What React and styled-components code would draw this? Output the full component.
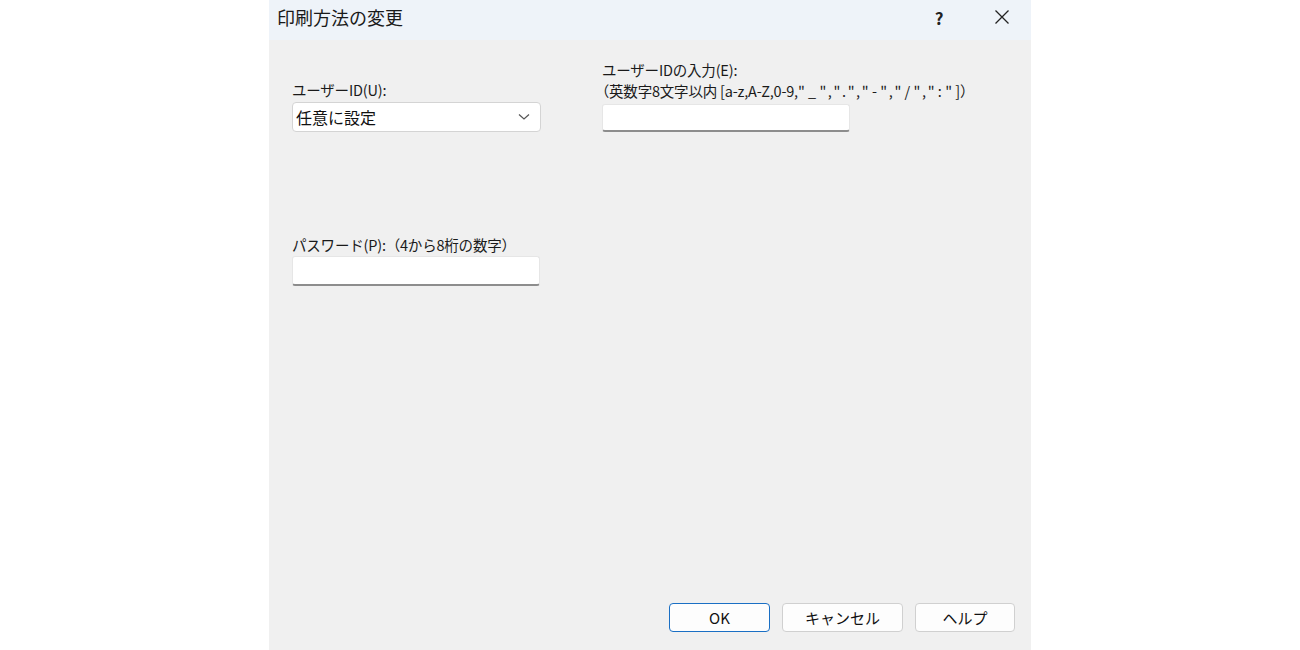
import React from "react";
import styled, { createGlobalStyle } from "styled-components";

const Global = createGlobalStyle`
  html, body { margin: 0; padding: 0; background: #ffffff; }
  body { font-family: "Noto Sans CJK JP", "Noto Sans", sans-serif; color: #1a1a1a; }
`;

const Page = styled.div`
  width: 1300px;
  height: 650px;
  display: flex;
  justify-content: center;
  overflow: hidden;
`;

const Dialog = styled.div`
  width: 762px;
  height: 650px;
  display: flex;
  flex-direction: column;
  background: #f0f0f0;
`;

const TitleBar = styled.div`
  height: 40px;
  flex: none;
  background: #eef3f9;
  display: flex;
  align-items: center;
  padding: 0 18px 0 8px;
`;

const Title = styled.div`
  flex: 1;
  font-size: 18px;
  color: #1a1a1a;
  margin-top: -6px;
`;

const TitleButton = styled.div`
  width: ${(p) => p.$w}px;
  margin-right: ${(p) => p.$mr || 0}px;
  height: 34px;
  display: flex;
  align-items: center;
  justify-content: center;
  font-size: 17px;
  font-weight: 600;
  color: #222;
  margin-top: -6px;
`;

const Body = styled.div`
  flex: 1;
  display: grid;
  grid-template-columns: 249px 250px;
  column-gap: 61px;
  padding: 0 23px;
  align-content: start;
`;

const Column = styled.div`
  display: flex;
  flex-direction: column;
  padding-top: ${(p) => p.$top}px;
`;

const Label = styled.div`
  font-size: 14.5px;
  line-height: ${(p) => p.$lh || 18}px;
  color: #1a1a1a;
  white-space: nowrap;
  letter-spacing: -0.2px;
`;

const Half = styled.span`
  font-feature-settings: "halt";
`;

const Wide = styled.span`
  letter-spacing: 3.3px;
`;

const Combo = styled.div`
  margin-top: 3px;
  height: 30px;
  box-sizing: border-box;
  border: 1px solid #d4d4d4;
  border-radius: 4px;
  background: #ffffff;
  display: flex;
  align-items: center;
  padding: 0 10px 0 3px;
  font-size: 16px;
  color: #111;
`;

const ComboText = styled.span`
  flex: 1;
`;

const TextBox = styled.div`
  margin-top: ${(p) => p.$mt}px;
  width: ${(p) => p.$w}px;
  height: ${(p) => p.$h}px;
  box-sizing: border-box;
  background: #ffffff;
  border: 1px solid #e6e6e6;
  border-bottom: 2px solid #8d8d8d;
  border-radius: 3px;
`;

const Spacer = styled.div`
  height: ${(p) => p.$h}px;
`;

const Footer = styled.div`
  display: flex;
  justify-content: flex-end;
  gap: 12px;
  padding: 0 16px 18px 0;
`;

const Button = styled.div`
  height: 29px;
  width: ${(p) => p.$w}px;
  box-sizing: border-box;
  border: ${(p) => (p.$primary ? "1.5px solid #1a6fc4" : "1px solid #d0d0d0")};
  border-radius: 4px;
  background: #fdfdfd;
  display: flex;
  align-items: center;
  justify-content: center;
  font-size: 15px;
  color: #111;
`;

export default function App() {
  return (
    <>
      <Global />
      <Page>
        <Dialog>
          <TitleBar>
            <Title>印刷方法の変更</Title>
            <TitleButton $w={40} $mr={32}>?</TitleButton>
            <TitleButton $w={22}>
              <svg width="16" height="16" viewBox="0 0 16 16">
                <path d="M1.5 1.5 L14.5 14.5 M14.5 1.5 L1.5 14.5" stroke="#222" strokeWidth="1.3" fill="none" />
              </svg>
            </TitleButton>
          </TitleBar>
          <Body>
            <Column $top={41}>
              <Label>ユーザーID(U):</Label>
              <Combo>
                <ComboText>任意に設定</ComboText>
                <svg width="12" height="8" viewBox="0 0 12 8">
                  <path d="M1 1.5 L6 6 L11 1.5" stroke="#555" strokeWidth="1.2" fill="none" />
                </svg>
              </Combo>
              <Spacer $h={104} />
              <Label>パスワード(P):（4から8桁の数字）</Label>
              <TextBox $mt={2} $w={248} $h={30} />
            </Column>
            <Column $top={19}>
              <Label $lh={21}>
                ユーザーIDの入力(E):
                <br />
                <Half>（</Half>英数字8文字以内 [a-z,A-Z,0-9,<Wide>"_",".","-","/",":"</Wide>]<Half>）</Half>
              </Label>
              <TextBox $mt={3} $w={248} $h={28} />
            </Column>
          </Body>
          <Footer>
            <Button $primary $w={101}>OK</Button>
            <Button $w={121}>キャンセル</Button>
            <Button $w={100}>ヘルプ</Button>
          </Footer>
        </Dialog>
      </Page>
    </>
  );
}
